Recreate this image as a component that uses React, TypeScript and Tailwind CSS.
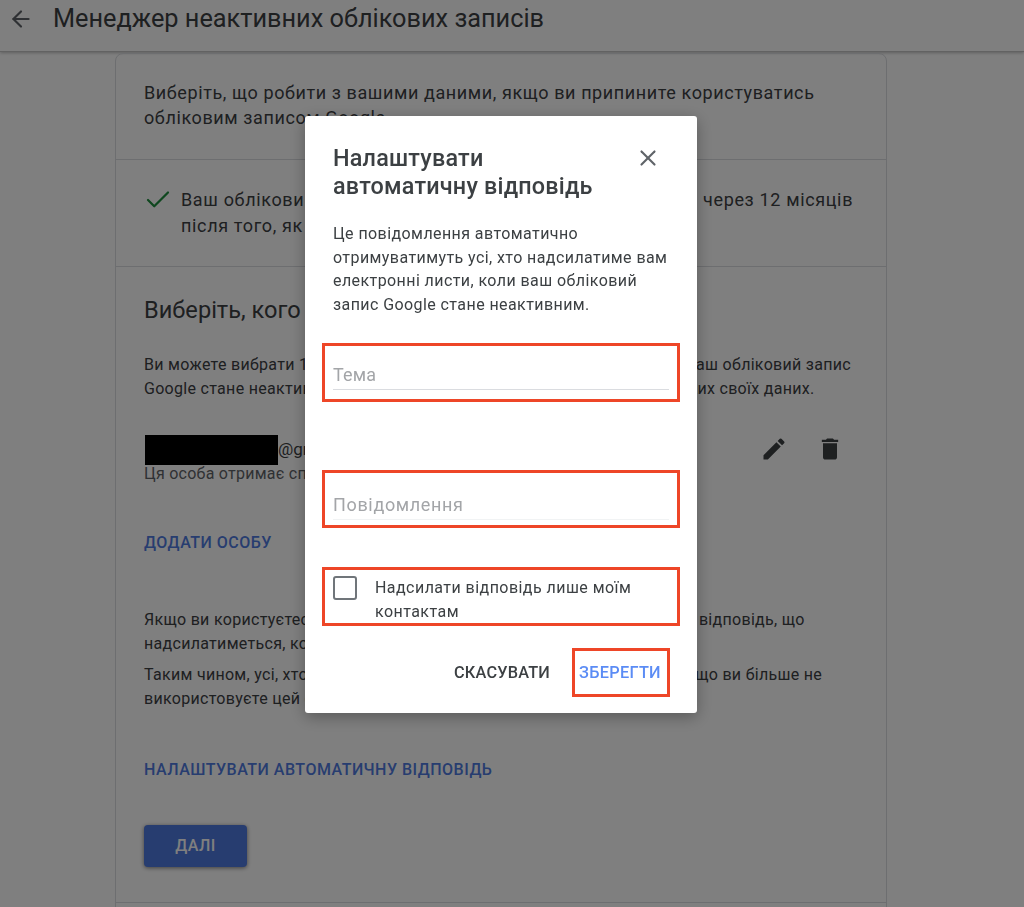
import { ArrowLeft, Check, X } from 'lucide-react';

const font = { fontFamily: 'Roboto, "Noto Sans", sans-serif' };

function PencilIcon() {
  return (
    <svg viewBox="0 0 24 24" className="h-[28px] w-[28px] fill-[#3c4043]">
      <path d="M3 17.25V21h3.75L17.81 9.94l-3.75-3.75L3 17.25zM20.71 7.04a1 1 0 0 0 0-1.41l-2.34-2.34a1 1 0 0 0-1.41 0l-1.83 1.83 3.75 3.75 1.83-1.83z" />
    </svg>
  );
}

function TrashIcon() {
  return (
    <svg viewBox="0 0 24 24" className="h-[28px] w-[28px] fill-[#3c4043]">
      <path d="M6 19c0 1.1.9 2 2 2h8c1.1 0 2-.9 2-2V7H6v12zM19 4h-3.5l-1-1h-5l-1 1H5v2h14V4z" />
    </svg>
  );
}

function Page() {
  return (
    <div className="h-[907px] overflow-hidden bg-white text-[#3c4043]">
      <header className="flex h-[52px] items-start border-b border-[#c4c4c4] pt-[1px] shadow-[0_1px_3px_rgba(0,0,0,0.25)]">
        <ArrowLeft className="ml-[8px] mt-[5px] h-[26px] w-[26px] text-[#5f6368]" strokeWidth={2} />
        <h1 className="ml-[19px] text-[25.3px] leading-[36px]">Менеджер неактивних облікових записів</h1>
      </header>
      <div className="pr-[22px] pt-[1px]">
        <main className="mx-auto h-[860px] w-[772px] rounded-t-lg border border-[#dadce0] [&>section]:border-b [&>section]:border-[#dadce0]">
          <section className="h-[106px] px-[28px] pt-[26px] text-[18px] leading-[25px] tracking-[0.6px]">
            <p className="whitespace-nowrap">
              Виберіть, що робити з вашими даними, якщо ви припините користуватись
              <br />
              обліковим записом Google.
            </p>
          </section>
          <section className="flex h-[107px] items-start gap-[8px] pl-[27px] pr-[28px] pt-[27px] text-[18px] leading-[26px] tracking-[0.65px]">
            <Check className="-mt-[2px] h-[30px] w-[30px] shrink-0 text-[#1e8e3e]" strokeWidth={1.8} />
            <p className="whitespace-nowrap">
              Ваш обліковий запис стане неактивним, і ми зв'яжемося через 12 місяців
              <br />
              після того, як ви припините ним користуватися.
            </p>
          </section>
          <section className="h-[636px] px-[28px] pt-[27px]">
            <h2 className="text-[23.6px] leading-[32px]">Виберіть, кого сповістити та кому надати доступ</h2>
            <p className="mt-[27px] whitespace-nowrap text-[16px] leading-[24px] tracking-[0.3px]">
              Ви можете вибрати 10 осіб, які отримають сповіщення і доступ, коли ваш обліковий запис
              <br />
              Google стане неактивним, і надати цим людям доступ до всіх або деяких своїх даних.
            </p>
            <div className="mt-[34px] flex items-start justify-between pr-[14px]">
              <div>
                <div className="flex h-[30px] items-center text-[17px]">
                  <span className="ml-px h-[30px] w-[133px] bg-black" />
                  <span>@gmail.com</span>
                </div>
                <p className="text-[16px] leading-[17px] tracking-[0.25px] text-[#5f6368]">Ця особа отримає сповіщення</p>
              </div>
              <div className="flex gap-[28px]">
                <PencilIcon />
                <TrashIcon />
              </div>
            </div>
            <p className="mt-[50px] text-[16px] font-medium leading-[22px] tracking-[0.5px] text-[#4f7ae0]">ДОДАТИ ОСОБУ</p>
            <p className="mt-[54px] whitespace-nowrap text-[16px] leading-[24px] tracking-[0.3px]">
              Якщо ви користуєтесь Gmail, також можете налаштувати автоматичну відповідь, що
              <br />
              надсилатиметься, коли обліковий запис стане неактивним.
            </p>
            <p className="mt-[7px] whitespace-nowrap text-[16px] leading-[24px] tracking-[0.3px]">
              Таким чином, усі, хто надсилатиме вам електронні листи, дізнаються, що ви більше не
              <br />
              використовуєте цей обліковий запис.
            </p>
            <p className="mt-[48px] text-[16px] font-medium leading-[22px] tracking-[0.5px] text-[#4f7ae0]">НАЛАШТУВАТИ АВТОМАТИЧНУ ВІДПОВІДЬ</p>
            <button className="mt-[44px] h-[42px] w-[103px] rounded-[4px] bg-[#4f7ae0] text-[16px] font-medium tracking-[0.4px] text-white shadow-[0_1px_4px_rgba(0,0,0,0.5)]">
              ДАЛІ
            </button>
          </section>
        </main>
      </div>
    </div>
  );
}

function Dialog() {
  return (
    <div className="fixed inset-0 flex justify-center bg-black/50 pr-[22px] pt-[116px]">
      <div className="h-[597px] w-[392px] rounded-[3px] bg-white px-[28px] pt-[28px] shadow-[0_4px_16px_rgba(0,0,0,0.3)]">
        <div className="flex items-start justify-between">
          <h3 className="text-[23.4px] font-medium leading-[28px] tracking-[0.2px] text-[#3c4043]">
            Налаштувати
            <br />
            автоматичну відповідь
          </h3>
          <X className="mr-[8px] mt-[1px] h-[26px] w-[26px] shrink-0 text-[#5f6368]" strokeWidth={2} />
        </div>
        <p className="mt-[22px] text-[16px] leading-[23.6px] tracking-[0.42px] text-[#3c4043]">
          Це повідомлення автоматично отримуватимуть усі, хто надсилатиме вам електронні листи, коли ваш обліковий запис Google стане неактивним.
        </p>
        <div className="-mx-[11px] mt-[27px] h-[59px] border-[3px] border-[#ee4628] px-[8px] pt-[15px]">
          <div className="h-[29px] border-b border-[#dadce0] text-[18px] leading-[28px] tracking-[0.2px] text-[#a3a5a8]">Тема</div>
        </div>
        <div className="-mx-[11px] mt-[68px] h-[58px] border-[3px] border-[#ee4628] px-[8px] pt-[18px]">
          <div className="h-[29px] border-b border-[#f1f3f4] text-[18px] leading-[28px] tracking-[0.65px] text-[#a3a5a8]">Повідомлення</div>
        </div>
        <div className="-mx-[11px] mt-[39px] flex h-[59px] gap-[18px] border-[3px] border-[#ee4628] px-[8px] pt-[6px]">
          <span className="h-[24px] w-[24px] shrink-0 rounded-[3px] border-[2px] border-[#70757a]" />
          <p className="text-[16px] leading-[23.5px] tracking-[0.45px] text-[#3c4043]">Надсилати відповідь лише моїм контактам</p>
        </div>
        <div className="-mr-[1px] mt-[22px] flex items-center justify-end gap-[22px]">
          <button className="text-[16.3px] font-medium tracking-[0.2px] text-[#3c4043]">СКАСУВАТИ</button>
          <button className="h-[49px] w-[98px] border-[3px] border-[#ee4628] pr-[2px] text-[16.3px] font-medium tracking-[0.3px] text-[#5b8cf5]">ЗБЕРЕГТИ</button>
        </div>
      </div>
    </div>
  );
}

export default function App() {
  return (
    <div style={font}>
      <Page />
      <Dialog />
    </div>
  );
}
